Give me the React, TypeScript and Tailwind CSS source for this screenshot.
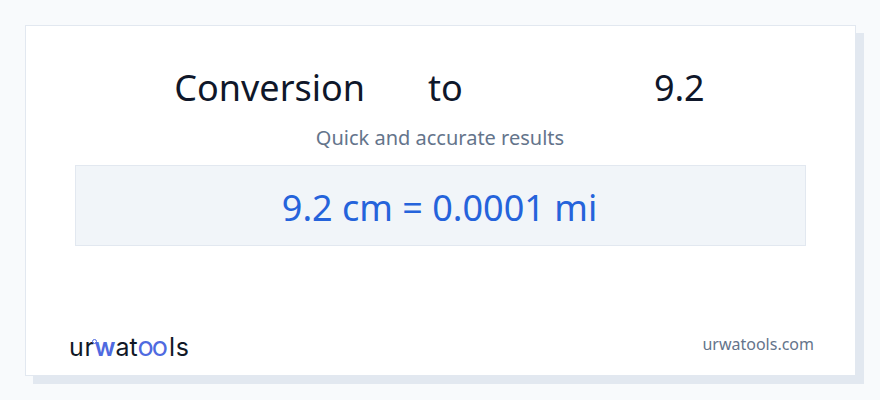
export default function App() {
  return (
    <main className="h-[400px] w-[880px] bg-[#f8fafc] pl-[25px] pt-[25px] font-['Noto_Sans',sans-serif]">
      <div className="flex h-[351px] w-[831px] flex-col border border-[#e2e8f0] bg-white px-[49px] shadow-[8px_8px_0_#e2e8f0]">
        <h1 className="mt-[37px] flex justify-center text-[36px] leading-[50px] font-normal text-[#0f172a]">
          <span className="ml-[-2px]">Conversion</span>
          <span className="ml-[63px]">to</span>
          <span className="ml-[191px]">9.2</span>
        </h1>
        <p className="mt-[11px] ml-[-1px] text-center text-[20px] leading-[27px] text-[#64748b]">Quick and accurate results</p>
        <div className="mt-[14px] flex h-[81px] items-center justify-center border border-[#e2e8f0] bg-[#f1f5f9] pt-[4px] text-[36px] text-[#2563db]">
          <span className="ml-[-2px]">9.2 cm = 0.0001 mi</span>
        </div>
        <div className="mt-auto mb-[19px] flex items-center justify-between">
          <div className="relative top-[1px] ml-[-6px] flex h-[24px] items-baseline font-['Inter',sans-serif] text-[25px] leading-none font-normal text-[#111827]">
            <span className="tracking-[0.6px]">ur</span>
            <span className="relative font-semibold text-[#4f6ae0]">
              w
              <span className="absolute top-[4px] left-[-2px] h-[5px] w-[5px] rounded-full border border-[#4f6ae0]" />
            </span>
            <span>at</span>
            <span className="relative text-[27px] tracking-[-2px] text-[#4f6ae0]">oo</span>
            <span className="ml-[3px] tracking-[0.8px]">ls</span>
          </div>
          <span className="mr-[-8px] text-[16px] text-[#64748b]">urwatools.com</span>
        </div>
      </div>
    </main>
  );
}
